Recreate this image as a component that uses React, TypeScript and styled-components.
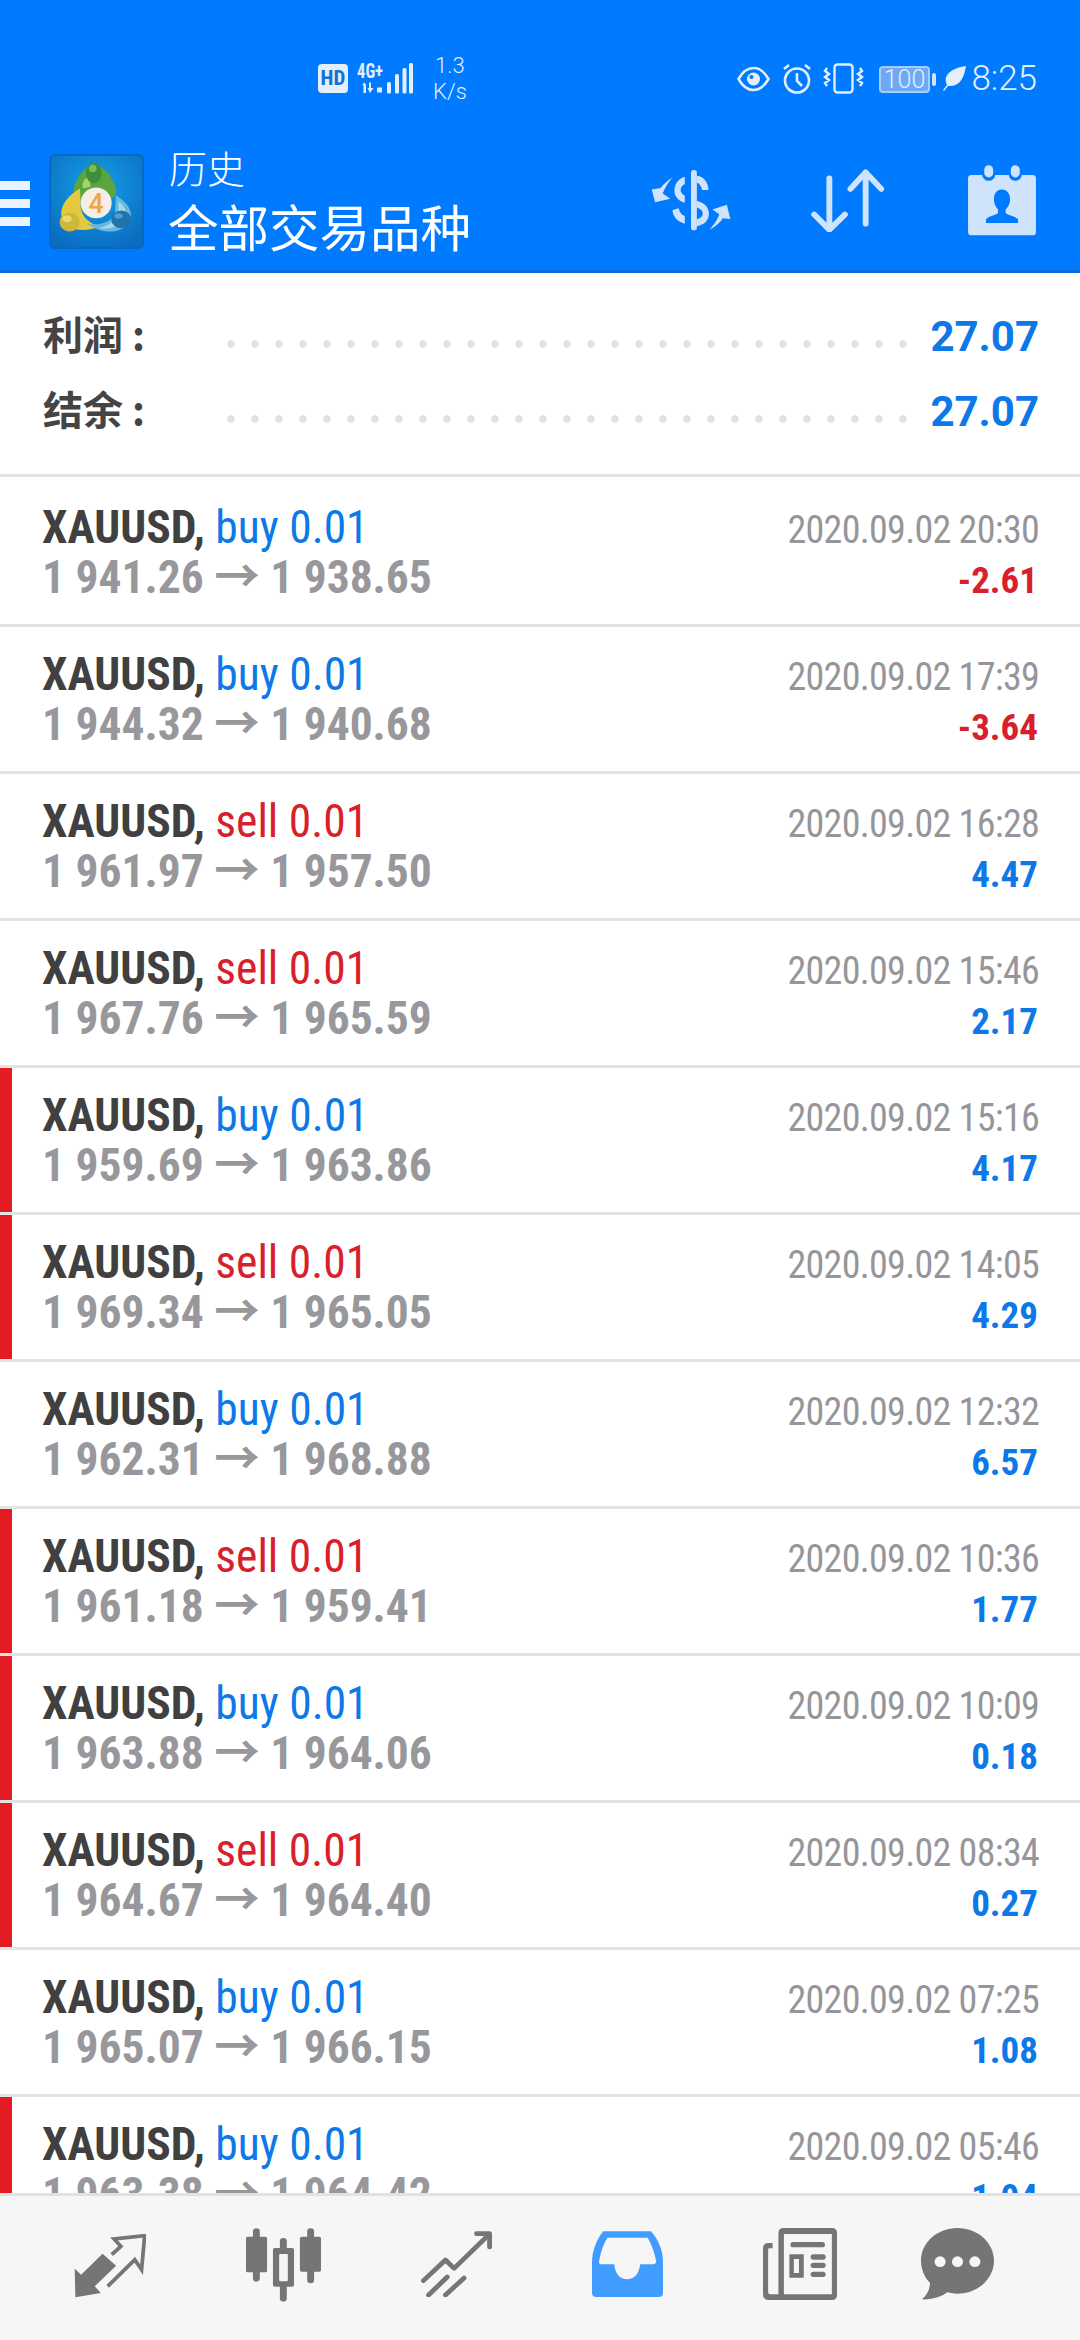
import React from "react";
import styled, { createGlobalStyle } from "styled-components";

const GlobalStyle = createGlobalStyle`
    html, body {
        margin: 0;
        padding: 0;
        background: #ffffff;
    }
    * {
        box-sizing: border-box;
    }
`;

const Page = styled.div`
    width: 1080px;
    height: 2340px;
    display: flex;
    flex-direction: column;
    overflow: hidden;
    background: #ffffff;
    font-family: Roboto, "Noto Sans CJK SC", sans-serif;
`;

const BlueTop = styled.div`
    flex: 0 0 273px;
    display: flex;
    flex-direction: column;
    background: #007aff;
    border-bottom: 3px solid #0a6fd8;
`;

const StatusBar = styled.div`
    flex: 0 0 150px;
    display: flex;
    justify-content: space-between;
    align-items: flex-start;
    padding: 57px 43px 0 318px;
    color: #e3effd;
`;

const StatusGroup = styled.div`
    display: flex;
    align-items: flex-start;
`;

const HdBadge = styled.div`
    width: 30px;
    height: 29px;
    margin-top: 7px;
    border-radius: 4px;
    background: #e3effd;
    color: #1670d8;
    font-size: 21px;
    font-weight: 700;
    line-height: 29px;
    text-align: center;
    font-stretch: 75%;
`;

const Speed = styled.div`
    margin: -4px 0 0 19px;
    font-size: 22px;
    line-height: 26px;
    text-align: center;
    font-weight: 300;
`;

const Clock = styled.div`
    margin-left: 5px;
    margin-top: 2px;
    font-size: 35px;
    line-height: 40px;
    font-weight: 300;
`;

const StatusIcon = styled.svg<{ $left: number; $top: number }>`
    display: block;
    flex: none;
    margin-left: ${(p) => p.$left}px;
    margin-top: ${(p) => p.$top}px;
`;

const Toolbar = styled.div`
    flex: 1;
    display: flex;
    align-items: flex-start;
`;

const Hamburger = styled.div`
    width: 30px;
    margin-top: 31px;
    display: flex;
    flex-direction: column;
    gap: 9px;
`;

const HamburgerBar = styled.div`
    height: 9px;
    background: #eaf3ff;
`;

const Logo = styled.div`
    width: 95px;
    height: 95px;
    margin: 4px 0 0 19px;
    border-radius: 6px;
    background: radial-gradient(circle at 50% 35%, #14a0e6, #0a6cc0 85%);
    box-shadow: inset 0 0 0 2px #0a68bc;
`;

const Titles = styled.div`
    margin-left: 25px;
    color: #ffffff;
    font-family: "Noto Sans CJK SC", sans-serif;
`;

const SubTitle = styled.div`
    font-size: 38px;
    line-height: 44px;
    font-weight: 300;
    margin-top: -5px;
`;

const MainTitle = styled.div`
    font-size: 50.5px;
    line-height: 62px;
    font-weight: 400;
    margin: 5px 0 0 -1px;
`;

const Actions = styled.div`
    margin-left: auto;
    padding: 14px 43px 0 0;
    display: flex;
    align-items: center;
    gap: 79px;

    svg:last-child {
        margin-left: 3px;
    }
`;

const Summary = styled.div`
    flex: 0 0 204px;
    padding: 24px 41px 0 43px;
    border-bottom: 3px solid #e4e4e4;
`;

const SummaryRow = styled.div`
    height: 75px;
    display: flex;
    align-items: center;
`;

const SummaryLabel = styled.div`
    width: 184px;
    margin-top: -4px;
    color: #444444;
    font-size: 40px;
    font-weight: 700;
    font-family: "Noto Sans CJK SC", sans-serif;
    line-height: 60px;
`;

const Leader = styled.div`
    width: 684px;
    height: 8px;
    margin-top: 18px;
    background-image: radial-gradient(circle at 4px 4px, #e3e3e3 3.5px, transparent 4px);
    background-size: 24px 8px;
`;

const SummaryValue = styled.div`
    margin-left: auto;
    margin-top: 4px;
    color: #0d78e8;
    font-size: 42px;
    font-weight: 700;
    line-height: 60px;
`;

const List = styled.div`
    flex: 1;
    min-height: 0;
    overflow: hidden;
    padding-top: 3px;
`;

const Row = styled.div<{ $flag: boolean }>`
    position: relative;
    height: 147px;
    padding: 22px 41px 0 42px;
    display: flex;
    justify-content: space-between;
    border-bottom: 3px solid #e4e4e4;

    &::before {
        content: "";
        display: ${(p) => (p.$flag ? "block" : "none")};
        position: absolute;
        left: 0;
        top: 0;
        bottom: 0;
        width: 12px;
        background: #e31b23;
    }
`;

const Narrow = styled.div`
    font-stretch: 75%;
    white-space: nowrap;
`;

const OrderLine = styled(Narrow)`
    font-size: 45.5px;
    line-height: 51px;
`;

const Symbol = styled.span`
    color: #404040;
    font-weight: 700;
`;

const Side = styled.span<{ $sell: boolean }>`
    color: ${(p) => (p.$sell ? "#d8202a" : "#0d78e8")};
`;

const Prices = styled(Narrow)`
    color: #98989c;
    font-size: 45.5px;
    line-height: 50px;
    font-weight: 700;
`;

const RightCol = styled.div`
    padding-top: 2px;
    text-align: right;
`;

const DateText = styled(Narrow)`
    color: #96969a;
    font-size: 38px;
    line-height: 52px;
    letter-spacing: -0.7px;
`;

const Profit = styled(Narrow)<{ $loss: boolean }>`
    color: ${(p) => (p.$loss ? "#d8202a" : "#0d78e8")};
    font-size: 37px;
    line-height: 50px;
    font-weight: 700;
    padding-right: 1px;
`;

const TabBar = styled.div`
    flex: 0 0 147px;
    display: flex;
    align-items: flex-start;
    gap: 100px;
    padding: 38px 0 0 74px;
    background: #f6f6f6;
    border-top: 3px solid #e2e2e2;
`;

const TabIcon = styled.svg<{ $top: number }>`
    display: block;
    flex: none;
    margin-top: ${(p) => p.$top}px;

    &:last-child {
        margin-left: -16px;
    }
`;

const trades = [
    { side: "buy", open: "1 941.26", close: "1 938.65", time: "20:30", profit: "-2.61", flag: false },
    { side: "buy", open: "1 944.32", close: "1 940.68", time: "17:39", profit: "-3.64", flag: false },
    { side: "sell", open: "1 961.97", close: "1 957.50", time: "16:28", profit: "4.47", flag: false },
    { side: "sell", open: "1 967.76", close: "1 965.59", time: "15:46", profit: "2.17", flag: false },
    { side: "buy", open: "1 959.69", close: "1 963.86", time: "15:16", profit: "4.17", flag: true },
    { side: "sell", open: "1 969.34", close: "1 965.05", time: "14:05", profit: "4.29", flag: true },
    { side: "buy", open: "1 962.31", close: "1 968.88", time: "12:32", profit: "6.57", flag: false },
    { side: "sell", open: "1 961.18", close: "1 959.41", time: "10:36", profit: "1.77", flag: true },
    { side: "buy", open: "1 963.88", close: "1 964.06", time: "10:09", profit: "0.18", flag: true },
    { side: "sell", open: "1 964.67", close: "1 964.40", time: "08:34", profit: "0.27", flag: true },
    { side: "buy", open: "1 965.07", close: "1 966.15", time: "07:25", profit: "1.08", flag: false },
    { side: "buy", open: "1 963.38", close: "1 964.42", time: "05:46", profit: "1.04", flag: true },
];

const ICON_LIGHT = "#cfe3fb";
const TAB_GREY = "#757575";

const App: React.FC = () => {
    return (
        <Page>
            <GlobalStyle />
            <BlueTop>
                <StatusBar>
                    <StatusGroup>
                        <HdBadge>HD</HdBadge>
                        <StatusIcon $left={9} $top={5} width="57" height="32" viewBox="0 0 57 32" fill="#e3effd">
                            <text x="0" y="16" fontSize="20" fontWeight="700" fontFamily="Roboto" fontStretch="condensed" textLength="26" lengthAdjust="spacingAndGlyphs">4G+</text>
                            <path d="M6.5 31V23H5l2.5-2.5 1.5 2.5V31ZM12 20.5H14V26L16.500 26 13 31 10.500 26H12ZM20 25.500H25V30.500H20Z" />
                            <rect x="30" y="20" width="4" height="11.500" rx="1.500" />
                            <rect x="38" y="12" width="4" height="19.500" rx="1.500" />
                            <rect x="45.500" y="6" width="4" height="25.500" rx="1.500" />
                            <rect x="52" y="1" width="4" height="30.500" rx="1.500" />
                        </StatusIcon>
                        <Speed>
                            1.3
                            <br />
                            K/s
                        </Speed>
                    </StatusGroup>
                    <StatusGroup>
                        <StatusIcon $left={0} $top={9} width="33" height="26" viewBox="0 0 33 26" fill="none" stroke="#e3effd" strokeWidth="2.6">
                            <path d="M1.5 13C6 5 11 2 16.5 2S27 5 31.5 13C27 21 22 24 16.5 24S6 21 1.5 13Z" />
                            <circle cx="16.5" cy="13" r="6.5" fill="#e3effd" stroke="none" />
                            <circle cx="14.5" cy="11" r="2" fill="#007aff" stroke="none" />
                        </StatusIcon>
                        <StatusIcon $left={12} $top={6} width="30" height="31" viewBox="0 0 30 31" fill="none" stroke="#e3effd" strokeWidth="2.6">
                            <circle cx="15" cy="17.5" r="12" />
                            <path d="M15 10v8l5 5M2 6l5-4M28 6l-5-4" />
                        </StatusIcon>
                        <StatusIcon $left={11} $top={6} width="41" height="31" viewBox="0 0 41 31" fill="none" stroke="#e3effd" strokeWidth="2.4">
                            <rect x="11.5" y="1.5" width="18" height="28" rx="3" />
                            <path d="M4 5l-2 3 4 3-4 3 4 3-4 3 2 3M37 5l2 3-4 3 4 3-4 3 4 3-2 3" />
                        </StatusIcon>
                        <StatusIcon $left={15.5} $top={9} width="58" height="27" viewBox="0 0 58 27">
                            <rect x="1" y="1" width="49" height="25" rx="3" fill="#6ea9f5" stroke="#a9cdfa" strokeWidth="2" />
                            <rect x="53" y="7" width="4" height="13" rx="2" fill="#cfe3fb" />
                            <text x="25.5" y="21.5" fontSize="25" fontWeight="300" fontFamily="Roboto" fill="#e3effd" textAnchor="middle">100</text>
                        </StatusIcon>
                        <StatusIcon $left={6} $top={9} width="23" height="25" viewBox="0 0 23 25" fill="#e3effd">
                            <path d="M23 0C21 12 17 21 5 20L1 25 0 24 4 19C-1 9 9 2 23 0Z" />
                        </StatusIcon>
                        <Clock>8:25</Clock>
                    </StatusGroup>
                </StatusBar>
                <Toolbar>
                    <Hamburger>
                        <HamburgerBar />
                        <HamburgerBar />
                        <HamburgerBar />
                    </Hamburger>
                    <Logo>
                        <svg width="95" height="95" viewBox="30 30 276 276">
                            <path d="M160 55C125 75 100 110 102 145 110 165 125 170 140 160L195 160C215 165 225 150 225 135 222 105 195 72 160 55Z" fill="#5ba53e" />
                            <path d="M128 130C125 110 135 95 150 100 L150 125Z" fill="#a6d36a" />
                            <ellipse cx="160" cy="85" rx="23" ry="30" fill="#3f8f3a" />
                            <ellipse cx="157" cy="72" rx="11" ry="11" fill="#79bb5a" />
                            <path d="M120 130C85 150 62 180 66 210 78 250 125 262 180 240 150 235 118 210 122 170Z" fill="#e6c83f" />
                            <path d="M224 150C258 170 272 195 268 218 250 262 190 268 140 232 175 240 215 228 222 200Z" fill="#68b7e0" />
                            <path d="M232 168C250 182 258 198 252 212 240 240 205 250 175 246 205 238 228 222 232 196Z" fill="#a8d8ee" />
                            <ellipse cx="90" cy="228" rx="29" ry="27" fill="#cdb83a" />
                            <ellipse cx="82" cy="218" rx="14" ry="10" fill="#e8d870" />
                            <ellipse cx="240" cy="220" rx="29" ry="26" fill="#1f74ae" />
                            <ellipse cx="232" cy="210" rx="12" ry="8" fill="#4d9fd0" />
                            <circle cx="167" cy="172" r="45" fill="#f3eee6" />
                            <text x="167" y="200" fontSize="78" fontWeight="500" fontFamily="Roboto" fill="#f0a640" textAnchor="middle">4</text>
                        </svg>
                    </Logo>
                    <Titles>
                        <SubTitle>历史</SubTitle>
                        <MainTitle>全部交易品种</MainTitle>
                    </Titles>
                    <Actions>
                        <svg width="80" height="62" viewBox="320 505 232 185" preserveAspectRatio="none" fill={ICON_LIGHT}>
                            <rect x="436" y="508" width="17" height="180" rx="8" />
                            <path d="M453 525C472 527 485 542 487 568L468 568C466 556 461 548 453 546Z" />
                            <path d="M418 528C398 535 388 550 388 570 388 588 400 600 418 606L418 585C410 580 406 575 406 568 406 560 410 554 418 550Z" />
                            <path d="M453 600C475 606 488 620 488 638 488 658 475 672 453 676ZM453 620V655C465 652 470 645 470 638 470 630 465 624 453 620Z" fillRule="evenodd" />
                            <path d="M418 668C398 662 385 650 382 628L400 622C403 634 409 642 418 645Z" />
                            <path d="M382 530C360 545 350 558 348 562L322 566 332 604 376 594 354 578C360 560 370 545 382 530Z" />
                            <path d="M490 686C515 672 525 658 528 652L550 654 540 612 498 626 518 640C512 658 502 672 490 686Z" />
                        </svg>
                        <svg width="75" height="63" viewBox="780 505 217 190" preserveAspectRatio="none" fill="none" stroke={ICON_LIGHT} strokeWidth="17" strokeLinecap="round" strokeLinejoin="round">
                            <path d="M836 533V688M792 642L836 688 881 642" />
                            <path d="M941 670V515M897 565L941 515 986 565" />
                        </svg>
                        <svg width="70" height="72" viewBox="1240 492 203 215" preserveAspectRatio="none" fill={ICON_LIGHT}>
                            <rect x="1243" y="525" width="197" height="180" rx="10" />
                            <rect x="1284" y="492" width="38" height="50" rx="19" fill="#007aff" />
                            <rect x="1361" y="492" width="38" height="50" rx="19" fill="#007aff" />
                            <rect x="1290" y="496" width="26" height="36" rx="13" />
                            <rect x="1367" y="496" width="26" height="36" rx="13" />
                            <path d="M1341 568C1325 568 1318 582 1318 598 1318 612 1325 622 1330 628V638C1320 646 1300 648 1295 658V668H1388V658C1382 648 1362 646 1352 638V628C1358 622 1365 612 1365 598 1365 582 1357 568 1341 568Z" fill="#007aff" />
                        </svg>
                    </Actions>
                </Toolbar>
            </BlueTop>
            <Summary>
                <SummaryRow>
                    <SummaryLabel>利润 :</SummaryLabel>
                    <Leader />
                    <SummaryValue>27.07</SummaryValue>
                </SummaryRow>
                <SummaryRow>
                    <SummaryLabel>结余 :</SummaryLabel>
                    <Leader />
                    <SummaryValue>27.07</SummaryValue>
                </SummaryRow>
            </Summary>
            <List>
                {trades.map((t) => (
                    <Row key={t.time} $flag={t.flag}>
                        <div>
                            <OrderLine>
                                <Symbol>XAUUSD,</Symbol>{" "}
                                <Side $sell={t.side === "sell"}>{t.side} 0.01</Side>
                            </OrderLine>
                            <Prices>
                                {t.open} → {t.close}
                            </Prices>
                        </div>
                        <RightCol>
                            <DateText>2020.09.02 {t.time}</DateText>
                            <Profit $loss={t.profit.startsWith("-")}>{t.profit}</Profit>
                        </RightCol>
                    </Row>
                ))}
            </List>
            <TabBar>
                <TabIcon $top={0} width="72" height="64" viewBox="214 343 212 192" preserveAspectRatio="none">
                    <path d="M216 447L235 465 298 402 338 438 275 500 293 520 218 533Z" fill={TAB_GREY} />
                    <path d="M325 405L352 380 332 358 422 348 413 450 393 420 313 500" fill="none" stroke={TAB_GREY} strokeWidth="11" />
                </TabIcon>
                <TabIcon $top={-6} width="75" height="74" viewBox="709 327 217 222" preserveAspectRatio="none" fill={TAB_GREY}>
                    <rect x="709" y="353" width="61" height="107" rx="5" />
                    <rect x="729" y="328" width="20" height="160" rx="10" />
                    <rect x="865" y="353" width="61" height="105" rx="5" />
                    <rect x="886" y="328" width="20" height="165" rx="10" />
                    <rect x="807" y="357" width="20" height="191" rx="10" />
                    <rect x="787" y="387" width="61" height="116" rx="5" />
                    <rect x="805" y="405" width="25" height="82" rx="4" fill="#f6f6f6" />
                </TabIcon>
                <TabIcon $top={-3} width="71" height="66" viewBox="1214 335 206 198" preserveAspectRatio="none" fill="none" stroke={TAB_GREY} strokeWidth="14" strokeLinecap="round" strokeLinejoin="round">
                    <path d="M1221 484L1285 422 1310 447 1408 349" />
                    <path d="M1375 343H1413V383" />
                    <path d="M1236 527L1290 473M1285 527L1339 476" />
                </TabIcon>
                <TabIcon $top={-3} width="71" height="66" viewBox="147 335 208 198" preserveAspectRatio="none">
                    <path d="M180 336H320C345 365 355 400 355 430V520Q355 533 342 533H160Q147 533 147 520V430C147 400 157 365 180 336Z" fill="#409cff" />
                    <path d="M192 355H310C322 375 330 400 335 425 335 432 331 435 325 435H288C285 465 270 480 250 480S215 465 212 435H175C170 435 166 432 168 425 172 400 180 375 192 355Z" fill="#f6f6f6" />
                </TabIcon>
                <TabIcon $top={-6} width="74" height="72" viewBox="647 327 216 216" preserveAspectRatio="none" fill={TAB_GREY}>
                    <path d="M708 327H848Q863 327 863 342V528Q863 543 848 543H665Q647 543 647 525V388Q647 372 663 372H675V388H666Q662 388 662 392V520Q662 526 668 526H692V342Q692 327 708 327ZM708 345V526H848V345Z" fillRule="evenodd" />
                    <rect x="727" y="369" width="101" height="16" rx="8" />
                    <path d="M724 406H766V476H724ZM737 420V462H752V420Z" fillRule="evenodd" />
                    <rect x="786" y="406" width="44" height="16" rx="8" />
                    <rect x="786" y="431" width="44" height="16" rx="8" />
                    <rect x="786" y="458" width="44" height="16" rx="8" />
                </TabIcon>
                <TabIcon $top={-6} width="73" height="72" viewBox="1108 327 210 216" preserveAspectRatio="none">
                    <path d="M1213 327C1270 327 1318 370 1318 425S1270 524 1213 524C1203 524 1193 522 1184 520 1170 532 1140 543 1110 541 1125 530 1133 512 1134 492 1118 475 1108 450 1108 425 1108 370 1156 327 1213 327Z" fill={TAB_GREY} />
                    <circle cx="1163" cy="428" r="16" fill="#f6f6f6" />
                    <circle cx="1213" cy="428" r="16" fill="#f6f6f6" />
                    <circle cx="1263" cy="428" r="16" fill="#f6f6f6" />
                </TabIcon>
            </TabBar>
        </Page>
    );
};

export default App;
